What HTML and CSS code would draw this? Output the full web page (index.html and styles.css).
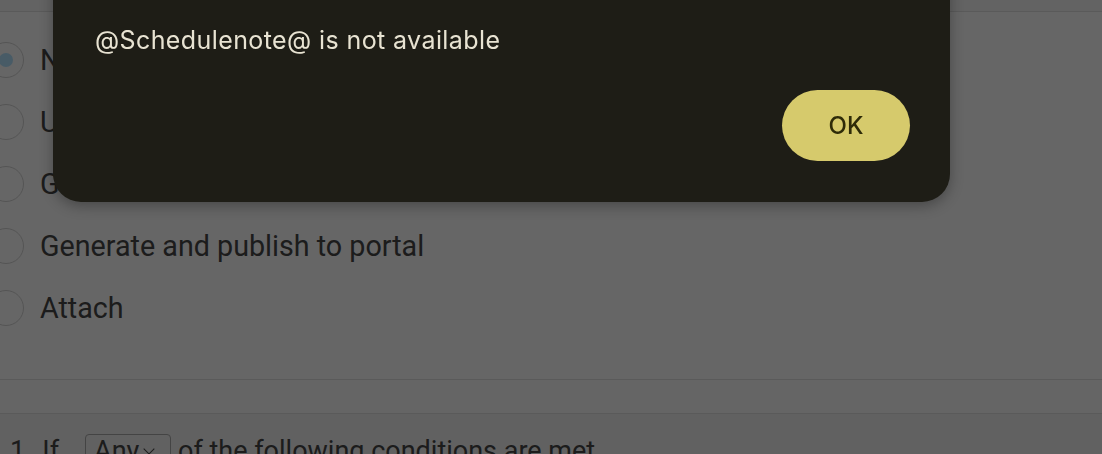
FILE: index.html
```html
<!DOCTYPE html>
<html lang="en">
<head>
  <meta charset="UTF-8">
  <meta name="viewport" content="width=device-width, initial-scale=1.0">
  <title>Schedule note</title>
  <link rel="stylesheet" href="styles.css">
</head>
<body>
  <div class="page">
    <div class="top-strip"></div>

    <div class="options">
      <label class="option"><span class="radio checked"></span>None</label>
      <label class="option"><span class="radio"></span>Upload to portal</label>
      <label class="option"><span class="radio"></span>Generate</label>
      <label class="option"><span class="radio"></span>Generate and publish to portal</label>
      <label class="option"><span class="radio"></span>Attach</label>
    </div>

    <div class="divider-strip"></div>

    <div class="rule-row">
      <span class="rule-num">1.</span>
      <span class="rule-if">If</span>
      <span class="select">Any <span class="caret"></span></span>
      <span>of the following conditions are met</span>
    </div>
  </div>

  <div class="scrim"></div>

  <div class="dialog">
    <p class="dialog-msg">@Schedulenote@ is not available</p>
    <div class="dialog-actions">
      <button class="btn-ok">OK</button>
    </div>
  </div>
</body>
</html>
```

FILE: styles.css
```css
html, body {
  margin: 0;
  height: 100%;
  overflow: hidden;
}
body {
  font-family: Roboto, "Noto Sans", sans-serif;
  background: #ccc;
  color: #383838;
}
.page {
  position: relative;
}
.top-strip {
  height: 11px;
  background: #c6c6c6;
  border-bottom: 1px solid #b4b4b4;
}
.options {
  padding: 17px 0 40px 0;
}
.option {
  display: flex;
  align-items: center;
  height: 62px;
  font-size: 28.7px;
  gap: 16px;
}
.radio {
  width: 36px;
  height: 36px;
  box-sizing: border-box;
  margin-left: -12px;
  border: 1px solid #aaa;
  border-radius: 50%;
  display: flex;
  align-items: center;
  justify-content: center;
}
.radio.checked::after {
  content: "";
  width: 14px;
  height: 14px;
  border-radius: 50%;
  background: #90b6cc;
}
.divider-strip {
  height: 33px;
  border-top: 1px solid #b4b4b4;
  border-bottom: 1px solid #b4b4b4;
  background: #cacaca;
}
.rule-row {
  display: flex;
  align-items: flex-start;
  padding: 21px 0 0 10px;
  font-size: 27px;
  background: #c2c2c2;
  height: 100px;
}
.rule-if {
  margin-left: 10px;
  margin-right: 26px;
}
.select {
  display: inline-flex;
  align-items: center;
  gap: 6px;
  width: 86px;
  box-sizing: border-box;
  border: 1px solid #888;
  border-radius: 4px;
  padding: 0 8px;
  margin-top: -1px;
  margin-right: 7px;
}
.caret {
  width: 7px;
  height: 7px;
  border-right: 1.5px solid #383838;
  border-bottom: 1.5px solid #383838;
  transform: rotate(45deg);
  margin-top: -4px;
}
.scrim {
  position: fixed;
  inset: 0;
  background: rgba(0, 0, 0, 0.5);
}
.dialog {
  position: absolute;
  left: 53px;
  top: -40px;
  width: 897px;
  box-sizing: border-box;
  padding: 64px 40px 41px 42px;
  background: #1e1d16;
  border-radius: 28px;
  box-shadow: 0 4px 14px rgba(0, 0, 0, 0.3);
  font-family: Inter, "Noto Sans", sans-serif;
}
.dialog-msg {
  margin: 0;
  font-size: 25px;
  letter-spacing: 0.4px;
  line-height: 32px;
  color: #e8e3d2;
}
.dialog-actions {
  display: flex;
  justify-content: flex-end;
  margin-top: 34px;
}
.btn-ok {
  width: 128px;
  height: 71px;
  border: none;
  border-radius: 36px;
  background: #d6ca6c;
  color: #2e2b08;
  font-family: Inter, "Noto Sans", sans-serif;
  font-size: 24px;
  font-weight: 500;
  cursor: pointer;
}
```
